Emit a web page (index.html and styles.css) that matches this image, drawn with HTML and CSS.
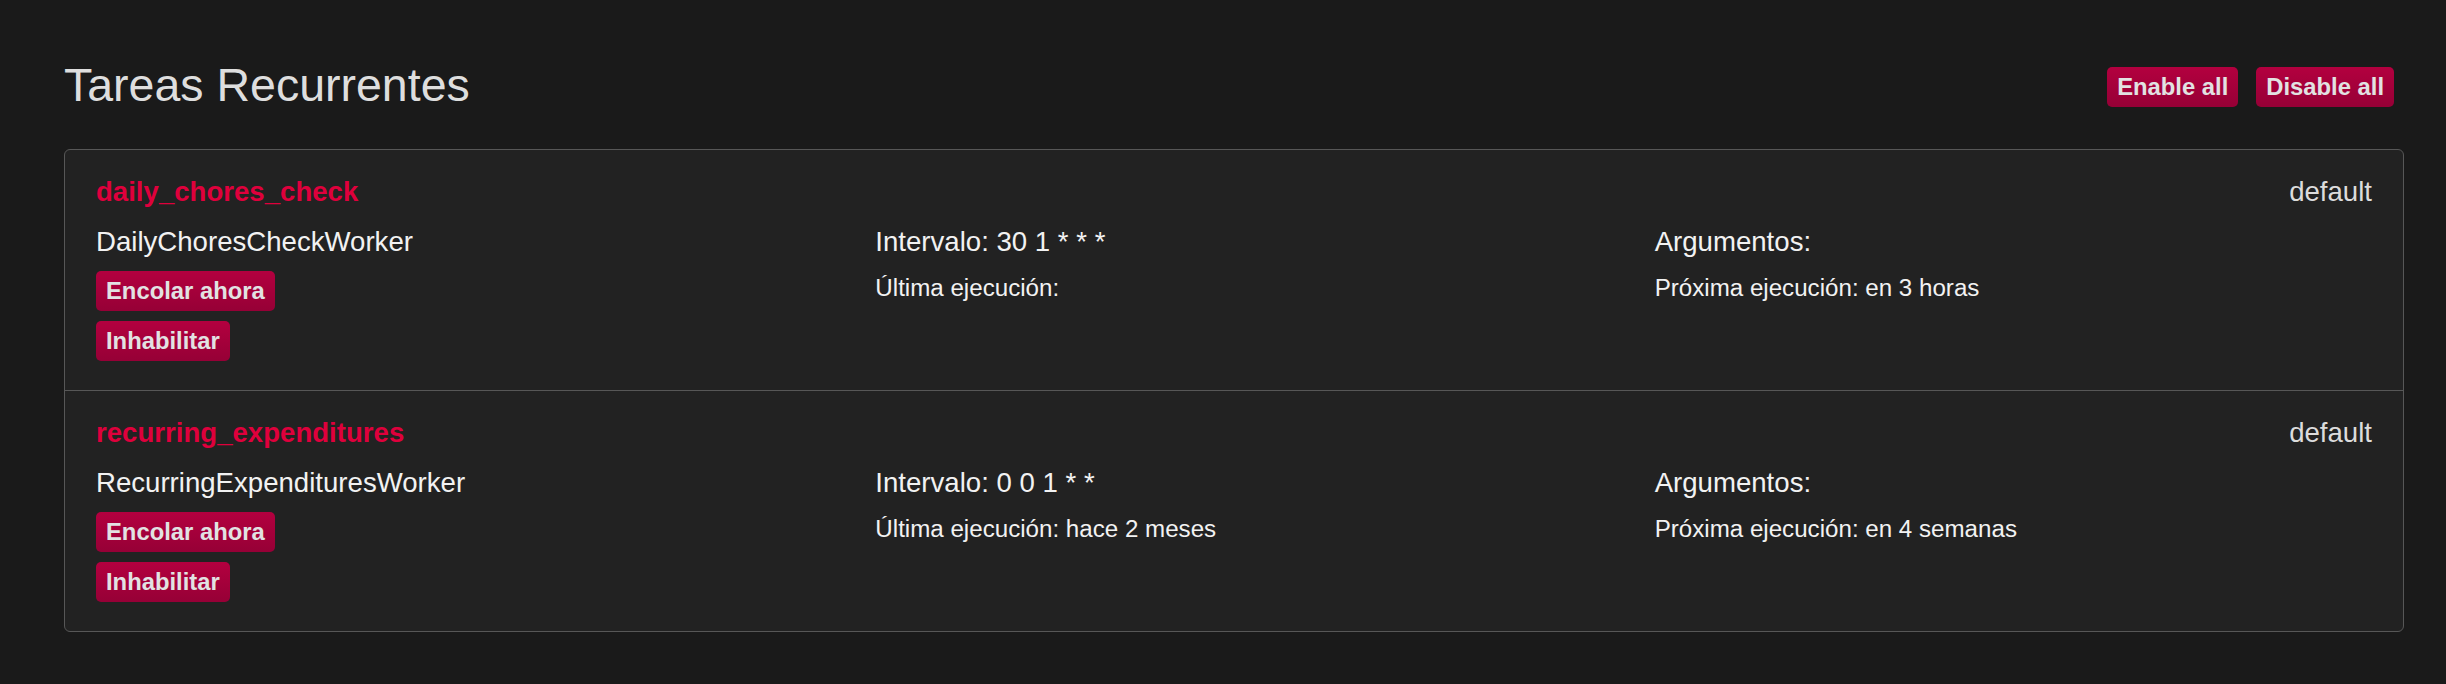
FILE: index.html
```html
<!DOCTYPE html>
<html lang="es">
<head>
<meta charset="utf-8">
<title>Tareas Recurrentes</title>
<link rel="stylesheet" href="styles.css">
</head>
<body>
<div class="page">
  <header class="page-header">
    <h1 class="title">Tareas Recurrentes</h1>
    <div class="header-actions">
      <button class="btn">Enable all</button>
      <button class="btn">Disable all</button>
    </div>
  </header>

  <section class="card">
    <article class="job">
      <div class="job-head">
        <a class="job-name" href="#">daily_chores_check</a>
        <span class="job-queue">default</span>
      </div>
      <div class="job-grid">
        <div class="job-col">
          <div class="worker">DailyChoresCheckWorker</div>
          <button class="btn">Encolar ahora</button>
          <button class="btn">Inhabilitar</button>
        </div>
        <div class="job-col">
          <div class="line">Intervalo: 30 1 * * *</div>
          <div class="small">Última ejecución:</div>
        </div>
        <div class="job-col">
          <div class="line">Argumentos:</div>
          <div class="small">Próxima ejecución: en 3 horas</div>
        </div>
      </div>
    </article>

    <article class="job">
      <div class="job-head">
        <a class="job-name" href="#">recurring_expenditures</a>
        <span class="job-queue">default</span>
      </div>
      <div class="job-grid">
        <div class="job-col">
          <div class="worker">RecurringExpendituresWorker</div>
          <button class="btn">Encolar ahora</button>
          <button class="btn">Inhabilitar</button>
        </div>
        <div class="job-col">
          <div class="line">Intervalo: 0 0 1 * *</div>
          <div class="small">Última ejecución: hace 2 meses</div>
        </div>
        <div class="job-col">
          <div class="line">Argumentos:</div>
          <div class="small">Próxima ejecución: en 4 semanas</div>
        </div>
      </div>
    </article>
  </section>
</div>
</body>
</html>
```

FILE: styles.css
```css
html, body {
  margin: 0;
  padding: 0;
}

body {
  background-color: #1a1a1a;
  color: #f2f2f2;
  font-family: "Liberation Sans", Arial, Helvetica, sans-serif;
  font-size: 27.6px;
  line-height: 1.42857;
  width: 2446px;
  height: 684px;
  overflow: hidden;
}

.page {
  padding: 60px 42px 0 64px;
}

.page-header {
  display: flex;
  align-items: center;
  justify-content: space-between;
  margin-bottom: 37.5px;
}

.title {
  margin: 0;
  font-size: 46.5px;
  font-weight: normal;
  line-height: 1.1;
  color: #dedede;
  letter-spacing: 0;
}

.header-actions {
  display: flex;
  gap: 18px;
  padding-right: 10px;
  margin-top: 3px;
}

.btn {
  font-family: "Liberation Sans", Arial, Helvetica, sans-serif;
  font-size: 23.8px;
  font-weight: bold;
  line-height: 34px;
  padding: 3px 10px 3px;
  color: #e2e2e2;
  background-color: #a80039;
  background-image: linear-gradient(#b3003f, #960036);
  border: 0;
  border-radius: 5px;
  cursor: pointer;
  white-space: nowrap;
}

.card {
  background-color: #222222;
  border: 1px solid #575757;
  border-radius: 6px;
}

.job {
  padding: 22px 0 29.5px;
}

.job + .job {
  border-top: 1px solid #575757;
}

.job-head {
  display: flex;
  justify-content: space-between;
  align-items: baseline;
  padding: 0 31px;
  margin-bottom: 10.6px;
}

.job-name {
  color: #df003c;
  font-weight: bold;
  text-decoration: none;
}

.job-queue {
  color: #dcdcdc;
}

.job-grid {
  display: grid;
  grid-template-columns: repeat(3, 1fr);
}

.job-col {
  display: flex;
  flex-direction: column;
  align-items: flex-start;
  gap: 9.5px;
  padding: 0 31px;
}

.job-col .btn + .btn {
  margin-top: 0.5px;
}

.small {
  font-size: 24.15px;
}
```
